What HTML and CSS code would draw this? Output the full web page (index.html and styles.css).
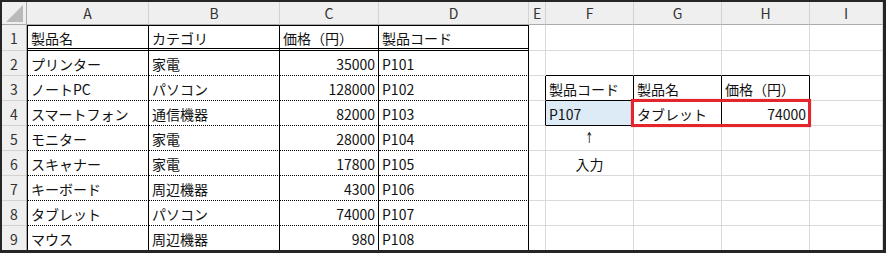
FILE: index.html
```html
<!DOCTYPE html>
<html lang="ja">
<head>
<meta charset="utf-8">
<title>製品一覧</title>
<link rel="stylesheet" href="styles.css">
</head>
<body>
<div class="frame">
  <div class="sheet">
    <!-- column headings -->
    <div class="corner"><svg width="24" height="22" viewBox="0 0 24 22"><polygon points="21,3 21,20 4,20" fill="#b9b9b9"/></svg></div>
    <div class="ch">A</div><div class="ch">B</div><div class="ch">C</div><div class="ch">D</div><div class="ch">E</div>
    <div class="ch">F</div><div class="ch">G</div><div class="ch">H</div><div class="ch">I</div>

    <!-- row 1 -->
    <div class="rh">1</div>
    <div class="c t ta r1">製品名</div><div class="c t r1">カテゴリ</div><div class="c t r1">価格（円）</div><div class="c t r1">製品コード</div>
    <div class="c"></div><div class="c"></div><div class="c"></div><div class="c"></div><div class="c"></div>

    <!-- row 2 -->
    <div class="rh">2</div>
    <div class="c t ta rd">プリンター</div><div class="c t rd">家電</div><div class="c t rd num">35000</div><div class="c t rd">P101</div>
    <div class="c"></div><div class="c bb"></div><div class="c bb"></div><div class="c bb"></div><div class="c"></div>

    <!-- row 3 -->
    <div class="rh">3</div>
    <div class="c t ta rd">ノートPC</div><div class="c t rd">パソコン</div><div class="c t rd num">128000</div><div class="c t rd">P102</div>
    <div class="c br"></div><div class="c br bb">製品コード</div><div class="c br bb">製品名</div><div class="c br bb">価格（円）</div><div class="c"></div>

    <!-- row 4 -->
    <div class="rh">4</div>
    <div class="c t ta rd">スマートフォン</div><div class="c t rd">通信機器</div><div class="c t rd num">82000</div><div class="c t rd">P103</div>
    <div class="c br"></div><div class="c br bb fill">P107</div>
    <div class="c br bb anchor">タブレット<div class="pick"></div></div>
    <div class="c br bb num">74000</div><div class="c"></div>

    <!-- row 5 -->
    <div class="rh">5</div>
    <div class="c t ta rd">モニター</div><div class="c t rd">家電</div><div class="c t rd num">28000</div><div class="c t rd">P104</div>
    <div class="c"></div><div class="c mid"><span class="arrow">↑</span></div><div class="c"></div><div class="c"></div><div class="c"></div>

    <!-- row 6 -->
    <div class="rh">6</div>
    <div class="c t ta rd">スキャナー</div><div class="c t rd">家電</div><div class="c t rd num">17800</div><div class="c t rd">P105</div>
    <div class="c"></div><div class="c mid">入力</div><div class="c"></div><div class="c"></div><div class="c"></div>

    <!-- row 7 -->
    <div class="rh">7</div>
    <div class="c t ta rd">キーボード</div><div class="c t rd">周辺機器</div><div class="c t rd num">4300</div><div class="c t rd">P106</div>
    <div class="c"></div><div class="c"></div><div class="c"></div><div class="c"></div><div class="c"></div>

    <!-- row 8 -->
    <div class="rh">8</div>
    <div class="c t ta rd">タブレット</div><div class="c t rd">パソコン</div><div class="c t rd num">74000</div><div class="c t rd">P107</div>
    <div class="c"></div><div class="c"></div><div class="c"></div><div class="c"></div><div class="c"></div>

    <!-- row 9 -->
    <div class="rh">9</div>
    <div class="c t ta rs">マウス</div><div class="c t rs">周辺機器</div><div class="c t rs num">980</div><div class="c t rs">P108</div>
    <div class="c"></div><div class="c"></div><div class="c"></div><div class="c"></div><div class="c"></div>
  </div>
</div>
</body>
</html>
```

FILE: styles.css
```css
html, body {
  margin: 0;
  padding: 0;
}

body {
  background: #252525;
  font-family: "Noto Sans CJK JP", "Noto Sans", sans-serif;
  font-size: 14px;
  color: #111;
}

.frame {
  box-sizing: border-box;
  width: 886px;
  height: 253px;
  padding: 2px 3px 3px 2px;
}

.sheet {
  display: grid;
  grid-template-columns: 25px 122px 131px 99px 150px 17px 88px 88px 88px 73px;
  grid-template-rows: 23px 26px repeat(8, 25px);
  height: 248px;
  background: #fff;
  overflow: hidden;
}

.sheet > div {
  box-sizing: border-box;
  min-width: 0;
}

/* heading strips */
.corner {
  background: #efefef;
  border-right: 1px solid #ababab;
  border-bottom: 1px solid #ababab;
}

.corner svg {
  display: block;
}

.ch {
  background: #efefef;
  border-right: 1px solid #d2d2d2;
  border-bottom: 1px solid #ababab;
  display: flex;
  align-items: center;
  justify-content: center;
  color: #333;
  line-height: 1;
}

.rh {
  background: #efefef;
  border-right: 1px solid #ababab;
  border-bottom: 1px solid #d2d2d2;
  display: flex;
  align-items: center;
  justify-content: center;
  color: #333;
  line-height: 1;
  padding-top: 1px;
}

/* worksheet cells */
.c {
  border-right: 1px solid #dadada;
  border-bottom: 1px solid #dadada;
  display: flex;
  align-items: center;
  padding: 1px 3px 0 3px;
  white-space: nowrap;
  line-height: 1;
}

.num {
  justify-content: flex-end;
}

.mid {
  justify-content: center;
}

.arrow {
  display: inline-block;
  font-family: "DejaVu Sans", sans-serif;
  font-size: 15px;
  transform: scaleX(0.6);
}

/* product table borders */
.t {
  border-right-color: #000;
}

.ta {
  border-left: 1px solid #000;
}

.r1 {
  border-top: 1px solid #000;
  border-bottom: 3px double #000;
}

.rd {
  border-bottom: 1px dotted #000;
}

.rs {
  border-bottom: 1px solid #000;
}

/* lookup box borders */
.br {
  border-right-color: #000;
}

.bb {
  border-bottom-color: #000;
}

.fill {
  background: #ddebf7;
}

/* highlight frame drawn over the two result cells */
.anchor {
  position: relative;
}

.pick {
  position: absolute;
  left: -3px;
  top: -2px;
  width: 180px;
  height: 28px;
  box-sizing: border-box;
  border: 3px solid #e2262c;
  box-shadow: 0 0 1px rgba(226, 38, 44, 0.6);
  pointer-events: none;
}
```
